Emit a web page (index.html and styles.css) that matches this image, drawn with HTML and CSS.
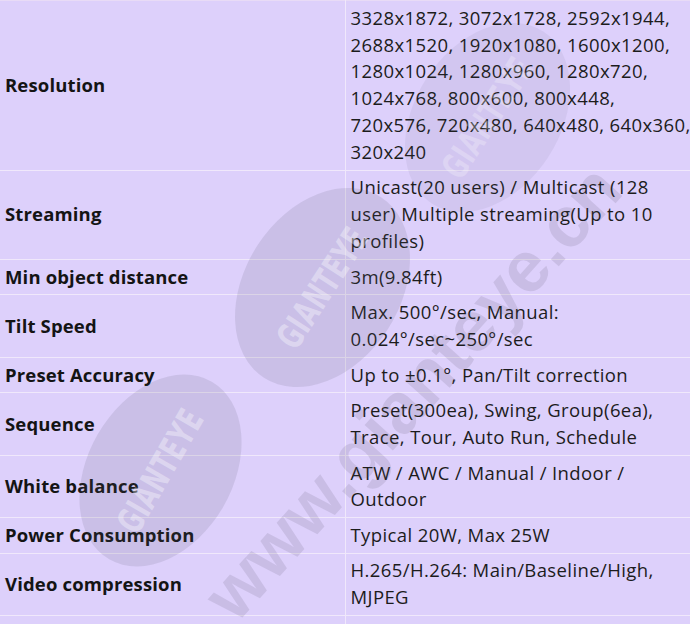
FILE: index.html
```html
<!DOCTYPE html>
<html lang="en">
<head>
<meta charset="utf-8">
<title>Specifications</title>
<link rel="stylesheet" href="styles.css">
</head>
<body>
<div class="page">
  <table class="spec">
    <colgroup><col class="c-label"><col class="c-value"></colgroup>
    <tbody>
      <tr><th>Resolution</th><td class="lines">3328x1872, 3072x1728, 2592x1944,<br>2688x1520, 1920x1080, 1600x1200,<br>1280x1024, 1280x960, 1280x720,<br>1024x768, 800x600, 800x448,<br>720x576, 720x480, 640x480, 640x360,<br>320x240</td></tr>
      <tr><th>Streaming</th><td>Unicast(20 users) / Multicast (128<br>user) Multiple streaming(Up to 10 profiles)</td></tr>
      <tr><th>Min object distance</th><td>3m(9.84ft)</td></tr>
      <tr><th>Tilt Speed</th><td>Max. 500°/sec, Manual: 0.024°/sec~250°/sec</td></tr>
      <tr><th>Preset Accuracy</th><td>Up to ±0.1°, Pan/Tilt correction</td></tr>
      <tr><th>Sequence</th><td>Preset(300ea), Swing, Group(6ea), Trace, Tour, Auto Run, Schedule</td></tr>
      <tr><th>White balance</th><td>ATW / AWC / Manual / Indoor / Outdoor</td></tr>
      <tr><th>Power Consumption</th><td>Typical 20W, Max 25W</td></tr>
      <tr><th>Video compression</th><td>H.265/H.264: Main/Baseline/High, MJPEG</td></tr>
      <tr class="empty"><th>&nbsp;</th><td>&nbsp;</td></tr>
    </tbody>
  </table>

  <div class="watermark" aria-hidden="true">
    <div class="disc disc-1"><span>GIANTEYE</span></div>
    <div class="disc disc-2"><span>GIANTEYE</span></div>
    <div class="disc disc-3"><span>GIANTEYE</span></div>
    <div class="url">www.gianteye.cn</div>
  </div>
</div>
</body>
</html>
```

FILE: styles.css
```css
html, body {
  margin: 0;
  padding: 0;
  background: #ddd0fb;
}

.page {
  position: relative;
  width: 690px;
  height: 624px;
  overflow: hidden;
  background: #ddd0fb;
}

.spec {
  width: 690px;
  table-layout: fixed;
  border-collapse: collapse;
  border-top: 1px solid #e8dbf6;
  font-family: "Open Sans", "Noto Sans CJK KR", sans-serif;
  font-size: 18.5px;
  line-height: 26.8px;
  color: #1c1c1c;
}

.c-label { width: 345px; }

.spec th,
.spec td {
  padding: 3.9px 0 3.9px 5px;
  border-bottom: 1px solid #f0e8fb;
  vertical-align: middle;
  text-align: left;
}

.spec th {
  font-weight: 700;
  letter-spacing: 0.15px;
  color: #141414;
  border-right: 1px solid #f0e8fb;
}

.spec td {
  font-weight: 400;
  letter-spacing: 0.4px;
}

.spec td.lines {
  white-space: nowrap;
}

.spec .empty th,
.spec .empty td {
  height: 40px;
}

.watermark {
  position: absolute;
  inset: 0;
  pointer-events: none;
  overflow: hidden;
}

.disc {
  position: absolute;
  border-radius: 50%;
  background: rgba(95, 90, 110, 0.14);
  display: flex;
  align-items: center;
  justify-content: center;
}

.disc span {
  font-family: "DejaVu Sans", sans-serif;
  font-stretch: condensed;
  font-weight: 700;
  font-size: 36px;
  letter-spacing: 1px;
  color: rgba(255, 255, 255, 0.36);
  transform: scaleX(0.72);
}

.disc-1 {
  left: 215px;
  top: 210px;
  width: 215px;
  height: 155px;
  transform: rotate(-57deg);
}

.disc-2 {
  left: 58px;
  top: 398px;
  width: 205px;
  height: 145px;
  transform: rotate(-60deg);
}

.disc-3 {
  left: 385px;
  top: 45px;
  width: 205px;
  height: 145px;
  transform: rotate(-57deg);
  background: rgba(95, 90, 110, 0.08);
}

.disc-3 span {
  color: rgba(255, 255, 255, 0.25);
}

.url {
  position: absolute;
  left: 412px;
  top: 392px;
  transform: translate(-50%, -50%) rotate(-48deg);
  font-family: "Liberation Sans", sans-serif;
  font-weight: 700;
  font-size: 72px;
  white-space: nowrap;
  color: rgba(85, 80, 100, 0.14);
}
```
